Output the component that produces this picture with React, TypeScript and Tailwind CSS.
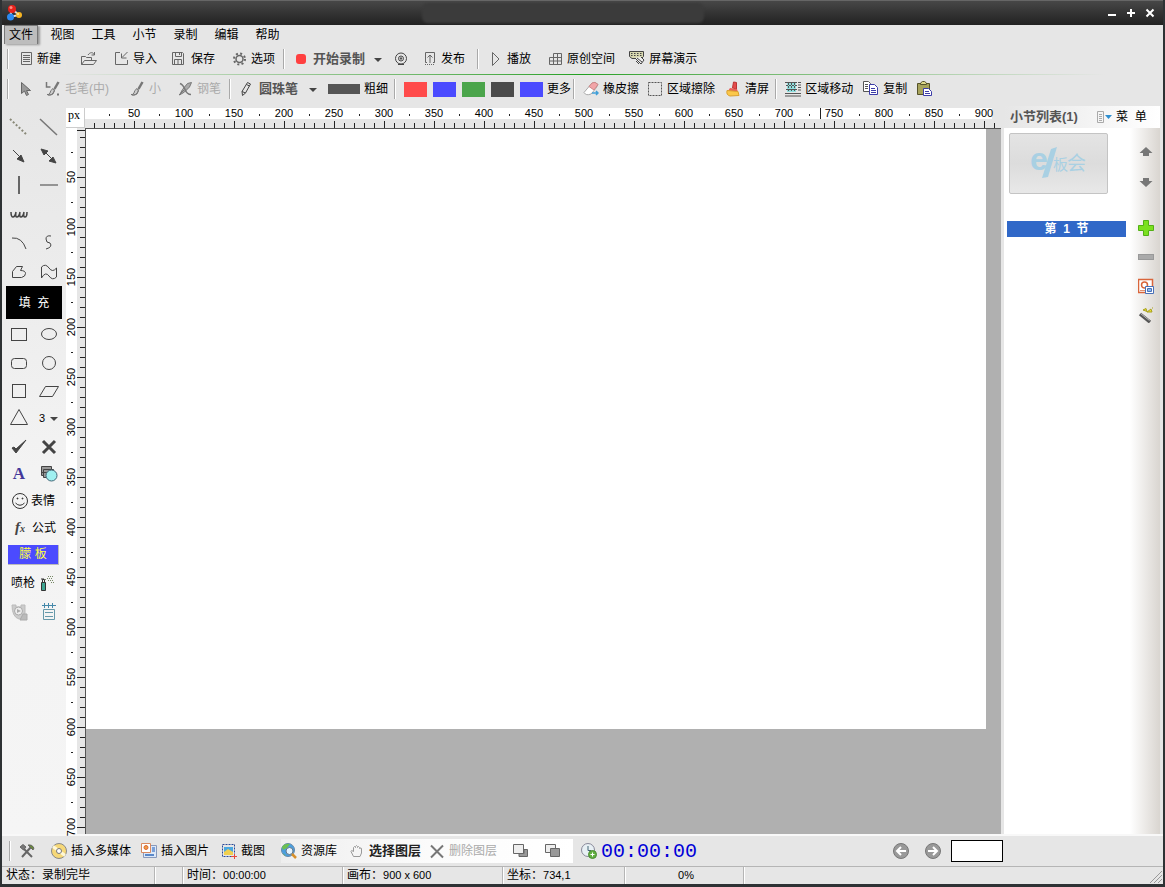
import React from "react";

interface IconProps {
  children: React.ReactNode;
  className?: string;
}

const Icon: React.FC<IconProps> = ({ children, className = "text-[#666]" }) => (
  <svg
    width="16"
    height="16"
    viewBox="0 0 16 16"
    fill="none"
    stroke="currentColor"
    strokeWidth="1"
    className={`shrink-0 ${className}`}
    aria-hidden="true"
  >
    {children}
  </svg>
);

interface ToolProps {
  icon?: React.ReactNode;
  text?: string;
  label?: string;
  className?: string;
}

const Tool: React.FC<ToolProps> = ({ icon, text, label, className = "mr-4" }) => (
  <button
    type="button"
    aria-label={label}
    className={`flex h-6 shrink-0 items-center gap-1 whitespace-nowrap ${className}`}
  >
    {icon}
    {text && <span>{text}</span>}
  </button>
);

const Divider = () => (
  <div className="mr-2 h-5 w-0.5 shrink-0 border-l border-[#a9a9a9] bg-white"></div>
);

const Caret = () => (
  <svg width="10" height="16" viewBox="0 0 10 16" className="shrink-0" aria-hidden="true">
    <path d="M1 7h8L5 11z" fill="#444" />
  </svg>
);

const menus = ["视图", "工具", "小节", "录制", "编辑", "帮助"];

const TitleBar = () => (
  <header className="flex h-[25px] items-center bg-linear-to-b from-[#474747] to-[#222] border-t border-[#666]">
    <svg width="18" height="18" viewBox="0 0 18 18" className="ml-1 shrink-0" aria-hidden="true">
      <path d="M6 5L4 13L13 11Z" fill="none" stroke="#ddd" strokeWidth="2" />
      <circle cx="6" cy="5" r="4" fill="#e8221b" />
      <circle cx="5" cy="3.500" r="1.500" fill="#ff8a80" />
      <circle cx="4.500" cy="13" r="3.500" fill="#2b8af0" />
      <circle cx="13" cy="11" r="3" fill="#f8b522" />
      <circle cx="12" cy="10" r="1" fill="#ffe9a0" />
    </svg>
    <div className="flex flex-1 justify-center">
      <div className="h-5 w-[282px] rounded-md bg-[#3b3b3b] blur-[1px]"></div>
    </div>
    <div className="mr-1 flex text-white">
      <button type="button" aria-label="最小化" className="flex w-[19px] justify-center">
        <Icon className="text-white"><path d="M4 10h8" strokeWidth="2" /></Icon>
      </button>
      <button type="button" aria-label="最大化" className="flex w-[19px] justify-center">
        <Icon className="text-white"><path d="M4 8h8M8 4v8" strokeWidth="2" /></Icon>
      </button>
      <button type="button" aria-label="关闭" className="flex w-[19px] justify-center">
        <Icon className="text-white"><path d="M4.500 4.500l7 7M11.500 4.500l-7 7" strokeWidth="2" /></Icon>
      </button>
    </div>
  </header>
);

const MenuBar = () => (
  <nav className="flex h-[18px] items-start pl-0.5">
    <button
      type="button"
      className="mr-1 h-[19px] w-[34px] shrink-0 border border-b-0 border-[#777] bg-[#bdbdbd] shadow-[2px_1px_2px_#999]"
    >
      文件
    </button>
    {menus.map((m) => (
      <button type="button" key={m} className="h-[19px] w-[41px] shrink-0 text-center">
        {m}
      </button>
    ))}
  </nav>
);

const FileBar = () => (
  <div className="flex h-[31px] items-center pl-[5px]">
    <Divider />
    <Tool
      className="mr-5"
      text="新建"
      icon={<Icon><path d="M4.500 1.500h10v12h-10zM6 4.500h7M6 6.500h7M6 8.500h7M6 10.500h7" /></Icon>}
    />
    <Tool
      label="打开"
      icon={<Icon><path d="M.5 13.500v-8h4l1 1h5v3M.5 13.500l3-4h12l-3 4zM7 4c2-3 5-3 6-.5M13.500 1v3h-3" /></Icon>}
    />
    <Tool
      className="mr-3.5"
      text="导入"
      icon={<Icon><path d="M7 1.500H2.500v12h12V9M14.500 1L9 6.500M8.500 2.500v4.500h5" /></Icon>}
    />
    <Tool
      text="保存"
      icon={<Icon><path d="M1.500 1.500h10l1 1v11h-11zM4.500 1.500v4h6v-4M8.500 2v2M3.500 13.500v-5h7v5M7 9v4" /></Icon>}
    />
    <Tool
      className="mr-2"
      text="选项"
      icon={
        <Icon>
          <circle cx="8.500" cy="8" r="3.500" strokeWidth="1.500" />
          <circle cx="8.500" cy="8" r="5.500" strokeWidth="2" strokeDasharray="2 2.320" />
        </Icon>
      }
    />
    <Divider />
    <Tool
      className="mr-2 text-[13px] font-bold text-[#555]"
      text="开始录制"
      icon={<Icon><rect x="3" y="3" width="10" height="10" rx="3" fill="#ff4040" stroke="none" /></Icon>}
    />
    <Tool className="mr-2.5" label="录制选项" icon={<Caret />} />
    <Tool
      className="mr-3"
      label="摄像头"
      icon={<Icon className="text-[#444]"><circle cx="8" cy="7.500" r="5.500" /><circle cx="8" cy="7.500" r="2.500" /><circle cx="8" cy="7.500" r=".8" fill="currentColor" /><path d="M5 13.500h6" /></Icon>}
    />
    <Tool
      className="mr-3"
      text="发布"
      icon={<Icon><path d="M6 11.500H4.500v-10h9v10H12M9 12V4M6.500 6.500L9 4l2.500 2.500" /><path d="M4 13.500h10" strokeDasharray="1 1" /></Icon>}
    />
    <Divider />
    <Tool text="播放" icon={<Icon><path d="M5.500 1.500v13L12 8z" /></Icon>} />
    <Tool
      className="mr-3.5"
      text="原创空间"
      icon={<Icon><path d="M2.500 6.500v7h12v-11h-8v11M2.500 6.500h12M2.500 10h12M10.500 2.500v11" /></Icon>}
    />
    <Tool
      className="mr-3"
      text="屏幕演示"
      icon={
        <Icon className="text-[#444]">
          <path d="M.5 .5h14v5l-2 2H3l-2.500-2z" fill="#d8d8b0" />
          <path d="M2 2.500h12M2 4.500h12" strokeDasharray="1.500 1.500" />
          <path d="M6 7l6 6 3-4-3-3M8 7l5 4M7 10l3 3" fill="#eee" />
        </Icon>
      }
    />
  </div>
);

const brush = (
  <>
    <path d="M13.500 1l-4 7" strokeWidth="2.500" />
    <path d="M8 7.500q-3 2-3 4.500-1 2-3 1.500 5 2 7.500-4z" fill="#ccc" />
    <path d="M9 8q1 2-1 5-2 1.500-5 1" />
  </>
);

const PenBar = () => (
  <div className="flex h-7 items-center pl-[5px]">
    <Divider />
    <Tool
      className="mr-3"
      label="选择"
      icon={<Icon><path d="M4.500 1.500v11l3-2.500 2 4.500 2-1-2-4h4z" fill="#999" /></Icon>}
    />
    <Tool
      className="mr-5 text-[#aaa]"
      text="毛笔(中)"
      icon={<Icon className="text-[#777]"><path d="M1.500 1v5h4" strokeWidth="1.500" />{brush}<path d="M12 13.500h2" strokeWidth="2" /></Icon>}
    />
    <Tool className="mr-4 text-[#aaa]" text="小" icon={<Icon className="text-[#777]">{brush}</Icon>} />
    <Tool
      className="mr-2 text-[#aaa]"
      text="钢笔"
      icon={<Icon className="text-[#777]"><path d="M14.500 1.500l-4 1-5 6-3 5.500 5-3 5-5zM2 14l5-5" fill="#aaa" /><path d="M3 2.500q3 1 5 6t6 5" strokeWidth="1.500" /></Icon>}
    />
    <Divider />
    <Tool
      className="mr-2.5 text-[13px] font-bold text-[#555]"
      text="圆珠笔"
      icon={<Icon className="text-[#444]"><path d="M8.500 1.500l3 1.500-5 9-3 2.500-.5-4zM7.500 3.500l3 1.500M3 10.500l3.500 1.500" /></Icon>}
    />
    <Tool className="mr-2.5" label="笔型" icon={<Caret />} />
    <button type="button" className="mr-1.5 flex h-6 shrink-0 items-center gap-1">
      <span className="h-2.5 w-8 bg-[#555]"></span>
      <span>粗细</span>
    </button>
    <Divider />
    <div className="mr-1 flex gap-1.5">
      <button type="button" aria-label="红色" className="h-[15px] w-[23px] bg-[#ff4b4b]"></button>
      <button type="button" aria-label="蓝色" className="h-[15px] w-[23px] bg-[#4b4bff]"></button>
      <button type="button" aria-label="绿色" className="h-[15px] w-[23px] bg-[#4ba54b]"></button>
      <button type="button" aria-label="黑色" className="h-[15px] w-[23px] bg-[#4b4b4b]"></button>
      <button type="button" aria-label="当前颜色" className="h-[15px] w-[23px] bg-[#4b4bff]"></button>
    </div>
    <Tool className="mr-0.5" text="更多" />
    <Divider />
    <Tool
      className="mr-2"
      text="橡皮擦"
      icon={
        <Icon>
          <path d="M1 11.500L9 2q3-2 6 1.500-1 3-7 9.500-5 2-7-1.500z" fill="#fff" stroke="#aaa" />
          <path d="M6 5.500L9 2q3-2 6 1.500L11 9z" fill="#f2a5a8" stroke="#c88" />
          <path d="M9 12h6M13 10l2 2-2 2" stroke="#3f9fd8" strokeWidth="1.500" />
        </Icon>
      }
    />
    <Tool
      className="mr-2.5"
      text="区域擦除"
      icon={<Icon><path d="M1.500 1.500h13v13h-13z" stroke="#555" strokeDasharray="2 1" /></Icon>}
    />
    <Tool
      className="mr-1.5"
      text="清屏"
      icon={
        <Icon>
          <path d="M8.500 1l3 .5V8l-4-1z" fill="#e44b4b" stroke="#b33" />
          <path d="M5 7l7 1 1 3-10-1z" fill="#e8605a" stroke="none" />
          <path d="M2 9.500l11 1 1 4-9 .5q-4-1-3-5.500z" fill="#fbc84a" stroke="#d9a030" />
        </Icon>
      }
    />
    <Divider />
    <Tool
      className="mr-2.5"
      text="区域移动"
      icon={
        <Icon>
          <rect x="2" y="2" width="9" height="9" fill="#8fe0e0" stroke="none" />
          <path d="M0 1.500h12M13 1.500h3M13 4h3M13 6.500h3M13 9h3M0 12.500h16M0 15h16" stroke="#555" />
          <path d="M3.500 2v9M6.500 2v9M9.500 2v9M1 4.500h11M1 8.500h11" stroke="#555" strokeDasharray="2 1" />
        </Icon>
      }
    />
    <Tool
      className="mr-2.5"
      text="复制"
      icon={
        <Icon>
          <path d="M.5 .5h5l2 2v8h-7z" fill="#fff" stroke="#555" />
          <path d="M2 3.500h3M2 5.500h3M2 7.500h3" stroke="#555" />
          <path d="M6.500 3.500h5l3 3v7h-8z" fill="#fff" stroke="#3c3ca8" />
          <path d="M8 7.500h4M8 9.500h5M8 11.500h5" stroke="#3c3ca8" />
        </Icon>
      }
    />
    <Tool
      className="mr-2"
      label="粘贴"
      icon={
        <Icon>
          <path d="M.5 2.500h12v11H.5z" fill="#a7a35c" stroke="#55522a" />
          <path d="M3.500 3.500V2l2-1.500h2l2 1.500v1.500z" fill="#ddd88a" stroke="#55522a" />
          <path d="M6.500 7.500h5l3 3v4h-8z" fill="#fff" stroke="#3c3ca8" />
          <path d="M8 10.500h4M8 12.500h5" stroke="#3c3ca8" />
        </Icon>
      }
    />
  </div>
);

interface ShapeProps {
  label: string;
  children: React.ReactNode;
}

const Shape: React.FC<ShapeProps> = ({ label, children }) => (
  <button type="button" aria-label={label} className="flex h-full items-center justify-center">
    <svg width="20" height="20" viewBox="0 0 20 20" fill="none" stroke="#444" aria-hidden="true">
      {children}
    </svg>
  </button>
);

const ShapePanel = () => (
  <aside className="w-16 shrink-0 bg-linear-to-b from-[#e6e6e6] via-[#f3f3f3] to-[#f5f5f5] px-0.5 pt-[9px]">
    <div className="grid auto-rows-[29px] grid-cols-2">
      <Shape label="虚线"><path d="M1 2l17 16" stroke="#887" strokeWidth="2" strokeDasharray="2 2" /></Shape>
      <Shape label="直线"><path d="M1 2l17 16" stroke="#777" strokeWidth="1.500" /></Shape>
      <Shape label="箭头"><path d="M4 4l8 8" /><path d="M15 16l-7-3 4-4z" fill="#444" /></Shape>
      <Shape label="双箭头"><path d="M5 5l10 10" /><path d="M2 3l7 2-4 4zM17 17l-7-2 4-4z" fill="#444" /></Shape>
      <Shape label="竖线"><path d="M10 1v18" stroke="#666" strokeWidth="2" /></Shape>
      <Shape label="横线"><path d="M1 10h18" stroke="#777" strokeWidth="1.500" /></Shape>
      <Shape label="波浪线"><path d="M2 8q0 5 2 5t3-5q-1 5 1 5t3-5q-1 5 1 5t3-5q-1 5 1 5t2-5" strokeWidth="1.500" /></Shape>
      <span></span>
      <Shape label="弧线"><path d="M3 5q10-1 14 11" /></Shape>
      <Shape label="曲线"><path d="M12 3q-5-1-5 3t4 4q3 4-4 6" /></Shape>
      <Shape label="多边形"><path d="M3.500 15.500v-6l4-5h6l-2 4q5 0 5 3t-4 4z" /></Shape>
      <Shape label="波浪形"><path d="M2.500 5q4-4 7.500 1t7.500 0v9q-4 4-7.500-1t-7.500 2z" /></Shape>
    </div>
    <button type="button" className="mb-px ml-0.5 h-[33px] w-14 bg-black text-[12px] text-white">
      <span className="whitespace-pre">填  充</span>
    </button>
    <div className="grid auto-rows-[28px] grid-cols-2">
      <Shape label="矩形"><rect x="2.500" y="4.500" width="15" height="12" /></Shape>
      <Shape label="椭圆"><ellipse cx="10" cy="10" rx="7.500" ry="5.500" /></Shape>
      <Shape label="圆角矩形"><rect x="2.500" y="6.500" width="15" height="10" rx="3" /></Shape>
      <Shape label="圆形"><circle cx="10" cy="11" r="6.500" /></Shape>
      <Shape label="正方形"><rect x="3.500" y="4.500" width="13" height="13" /></Shape>
      <Shape label="平行四边形"><path d="M6.500 6.500h13l-6 10H.5z" /></Shape>
      <Shape label="三角形"><path d="M10 1.500L18.500 16.500h-17z" /></Shape>
      <label className="flex items-center justify-center">
        <select aria-label="边数" className="w-2.5 appearance-none text-[11px]">
          <option>3</option>
        </select>
        <Caret />
      </label>
      <Shape label="对号"><path d="M3 12l4 5L17 4 7 13 5 11z" fill="#444" /></Shape>
      <Shape label="叉号"><path d="M4 5l12 12M16 5L4 17" strokeWidth="3" /></Shape>
    </div>
    <div className="grid auto-rows-[27px] grid-cols-2">
      <button type="button" className="font-['Liberation_Serif',serif] text-[17px] font-bold text-[#44389a]">A</button>
      <Shape label="图形库">
        <path d="M2.500 2.500h10v9h-10z" fill="#999" />
        <path d="M4.500 5.500h10v8h-10zM2 8.500h8" fill="#999" />
        <circle cx="12.500" cy="11.500" r="5.500" fill="#9ff0f0" stroke="#467" />
      </Shape>
      <button type="button" className="col-span-2 flex items-center gap-px pl-1.5">
        <svg width="20" height="20" viewBox="0 0 20 20" fill="none" stroke="#333" aria-hidden="true">
          <circle cx="10" cy="10" r="7.500" />
          <path d="M5.500 12q4.500 4.500 9 0" />
          <circle cx="7.500" cy="7.500" r=".5" fill="#333" />
          <circle cx="12.500" cy="7.500" r=".5" fill="#333" />
        </svg>
        <span>表情</span>
      </button>
      <button type="button" className="col-span-2 flex items-center gap-1 pl-2">
        <span className="w-4 font-['Liberation_Serif',serif] text-[15px] font-bold italic leading-4 text-[#444]">
          f<span className="text-[10px]">x</span>
        </span>
        <span>公式</span>
      </button>
      <div className="col-span-2 flex items-center pl-1">
        <button type="button" className="h-5 w-[51px] border-b border-r border-[#bbb] bg-[#4b4bff] text-[12px] leading-none text-[#ffff40]">
          朦 板
        </button>
      </div>
    </div>
    <div className="grid auto-rows-[29px] grid-cols-2">
      <button type="button" className="col-span-2 flex items-center gap-1 pl-[7px]">
        <span>喷枪</span>
        <svg width="16" height="16" viewBox="0 0 16 16" fill="none" stroke="#333" aria-hidden="true">
          <path d="M2.500 7.500h4v8h-4z" fill="#3fa592" />
          <path d="M3.500 7V4.500h2V7M2 4h3" />
          <path d="M6 4.500h2M8 3.500h6M9 1.500h6M9 5.500h5M12 7.500h3" stroke="#786" strokeDasharray="1 1" />
        </svg>
      </button>
      <Shape label="视频">
        <path d="M3 3h4v2h5V3h4v8q0 5-6 6-7-2-7-14z" fill="#ccc" stroke="#bbb" />
        <circle cx="9.500" cy="9" r="4" fill="#eee" stroke="#aaa" />
        <path d="M14 12h4v6h-7z" fill="#bbb" stroke="#aaa" />
        <path d="M8 7v4l4-2z" fill="#aaa" stroke="none" />
      </Shape>
      <Shape label="坐标">
        <path d="M3 3.500h14M5.500 1v5M9.500 1v5M13.500 1v5" stroke="#48a" />
        <path d="M4.500 7.500h11v10h-11zM6 10.500h8M6 14.500h8" stroke="#69a" />
      </Shape>
    </div>
  </aside>
);

// ruler marks, one per ten units of canvas
const hMarks = Array.from({ length: 91 }, (_, i) => (i + 1) * 10);
const vMarks = Array.from({ length: 70 }, (_, i) => (i + 1) * 10);

const HorizontalRuler = () => (
  <svg height="20" className="w-0 min-w-0 flex-1 overflow-hidden" fontSize="11" textAnchor="middle">
    <rect width="907" height="11" fill="#fff" />
    {hMarks.map((n) => (
      <g key={n}>
        <path d={`M${n - 0.5} ${n % 50 ? 15 : 13}V20`} stroke="#222" />
        {n % 50 === 0 && <text x={n - 1} y="9">{n}</text>}
        {n % 50 === 0 && <path d={`M${n - 25.5} 6v2`} stroke="#222" />}
      </g>
    ))}
    <path d="M735.500 0v11" stroke="#222" />
  </svg>
);

const VerticalRuler = () => (
  <div className="relative z-10 w-[19px] shrink-0 bg-linear-to-r from-white from-[11px] to-transparent to-[11px]">
    <svg width="19" height="706" fontSize="11" textAnchor="middle" className="overflow-visible">
      <path d="M11 2.500h8" stroke="#222" />
      {vMarks.map((n) => (
        <g key={n}>
          <path d={`M${n % 50 ? 14 : 11} ${n - 0.5}H19`} stroke="#222" />
          {n % 50 === 0 && <text transform={`translate(9 ${n - 1}) rotate(-90)`}>{n}</text>}
          {n % 50 === 0 && <path d={`M5 ${n - 25.5}h2`} stroke="#222" />}
        </g>
      ))}
    </svg>
  </div>
);

const Workspace = () => (
  <main className="flex min-w-0 flex-1 flex-col pt-[5px]">
    <div className="flex">
      <div className="h-5 w-[19px] shrink-0 border-b border-r border-[#ccc] bg-white pl-0.5 font-['Liberation_Serif',serif] text-[12px] leading-[14px]">
        px
      </div>
      <HorizontalRuler />
    </div>
    <div className="flex flex-1">
      <VerticalRuler />
      <div className="min-w-0 flex-1 overflow-hidden border-l border-t border-[#555] bg-[#b0b0b0]">
        <div className="h-[600px] w-[900px] bg-white"></div>
      </div>
    </div>
  </main>
);

const SectionPanel = () => (
  <aside className="ml-[3px] mr-[3px] mt-[3px] flex w-[156px] shrink-0 flex-col bg-white">
    <div className="flex h-[22px] items-center bg-linear-to-r from-[#e6e6e6] to-white pl-1.5">
      <h2 className="w-[86px] text-[13px] font-bold text-[#555]">小节列表(1)</h2>
      <button type="button" className="flex items-center gap-1">
        <svg width="16" height="14" viewBox="0 0 16 14" fill="none" stroke="#aaa" aria-hidden="true">
          <path d="M1.500 1.500h6v11h-6zM3 4.500h3M3 6.500h3M3 8.500h3M3 10.500h3" />
          <path d="M9 5h7l-3.500 4z" fill="#2f8fd0" stroke="none" />
        </svg>
        <span className="whitespace-pre">菜  单</span>
      </button>
    </div>
    <div className="flex flex-1">
      <div className="flex-1 pl-[3px]">
        <div className="ml-0.5 mt-[5px] flex h-[61px] w-[99px] items-center justify-center rounded-xs border border-[#c4c4c4] bg-linear-to-b from-[#e4e4e4] via-[#dcdcdc] to-[#e8e8e8]">
          <svg width="60" height="36" viewBox="0 0 60 36" fill="#a9d0e3" aria-hidden="true">
            <text x="1" y="24" fontSize="32" fontWeight="bold">e</text>
            <path d="M22 3l6-2-9 30-6 1z" />
            <text x="24" y="24" fontSize="15">板</text>
            <text x="38" y="24" fontSize="19">会</text>
          </svg>
        </div>
        <button type="button" className="mt-[27px] h-4 w-full whitespace-pre bg-[#3068c8] text-[12px] font-bold leading-4 text-white">
          第  1  节
        </button>
      </div>
      <div className="ml-1 flex w-[30px] shrink-0 flex-col items-center bg-linear-to-r from-white to-[#d9d5d0] pl-0.5 pt-[9px]">
        <Tool className="h-[30px]" label="上移" icon={<Icon><path d="M8 3l6.500 6H11v3H5V9H1.500z" fill="#777" stroke="none" /></Icon>} />
        <Tool className="mb-4 h-[30px]" label="下移" icon={<Icon><path d="M8 13l6.500-6H11V4H5v3H1.500z" fill="#777" stroke="none" /></Icon>} />
        <Tool className="h-[29px]" label="添加" icon={<Icon><path d="M5.500 .5h5v5h5v5h-5v5h-5v-5h-5v-5h5z" fill="#7be020" stroke="#52b015" /></Icon>} />
        <Tool className="h-[29px]" label="删除" icon={<Icon><rect x=".5" y="5.500" width="15" height="5" fill="#aaa" stroke="#999" /></Icon>} />
        <Tool
          className="h-[29px]"
          label="导入演示文稿"
          icon={
            <Icon>
              <path d="M.5 1.500h14v13H.5z" fill="#fff" stroke="#d9653b" strokeWidth="1.500" />
              <circle cx="6.500" cy="7" r="3" stroke="#d9653b" strokeWidth="1.500" />
              <path d="M2 12.500h5" stroke="#e09070" />
              <path d="M7.500 8.500h8v7h-8z" fill="#fff" stroke="#4870b8" />
              <path d="M9.500 10.500h4v3h-4z" fill="#8ab8f0" stroke="#4870b8" />
            </Icon>
          }
        />
        <Tool
          className="h-[29px]"
          label="特效"
          icon={
            <Icon>
              <path d="M2 7l10 8" stroke="#555" strokeWidth="3.500" />
              <path d="M2.500 6.500l9 7" stroke="#bbb" />
              <path d="M5 3l3-1.500 1 3zM9 5l4-3 1 3zM14 1h1" fill="#e8e030" stroke="#a8a020" />
            </Icon>
          }
        />
      </div>
    </div>
  </aside>
);

const InsertBar = () => (
  <div className="flex h-8 items-center border-t-2 border-[#f8f8f8] pl-[7px]">
    <Divider />
    <Tool
      className="mr-4"
      label="工具箱"
      icon={<Icon><path d="M3 14L12 4M4 5l9 9" strokeWidth="2" /><path d="M1 4l3-2.500L7 4 4.500 7z" fill="#777" /><path d="M9 2q4-1 6 3l-1 2-3-3z" fill="#6a8a3a" /></Icon>}
    />
    <Tool
      className="mr-2.5"
      text="插入多媒体"
      icon={
        <Icon>
          <circle cx="8" cy="8" r="7.500" fill="#f6d878" stroke="#888" />
          <path d="M8 8L2 3.500M8 8l6 4.500" stroke="#fff8d8" strokeWidth="3" />
          <circle cx="8" cy="8" r="2.500" fill="#fff" stroke="#777" />
        </Icon>
      }
    />
    <Tool
      className="mr-3"
      text="插入图片"
      icon={
        <Icon>
          <path d="M2.500 2.500h13v12h-13z" fill="#dce8f8" stroke="#89b" />
          <path d="M.5 .5h9v9H.5z" fill="#fff" stroke="#d98a60" />
          <circle cx="5" cy="4.500" r="2" fill="#f0a040" stroke="#d9653b" />
          <path d="M4 13v-2h9v2z" fill="#5a88c8" stroke="none" />
          <path d="M11 4h3v5h-3z" fill="#7aa0d8" stroke="none" />
        </Icon>
      }
    />
    <Tool
      className="mr-4"
      text="截图"
      icon={
        <Icon>
          <path d="M1.500 1.500h12v12h-12z" stroke="#2a4a98" strokeDasharray="2 1" />
          <path d="M3 4h9v8H3z" fill="#4aa8e0" stroke="none" />
          <path d="M3 9l4-3 5 3v3H3z" fill="#f0d050" stroke="none" />
          <path d="M10 13.500h6M13.500 11v5" stroke="#e84a3a" />
        </Icon>
      }
    />
    <div className="flex items-center bg-linear-to-r from-[#eee] via-[#fbfbfb] to-white">
      <Tool
        className="mr-3"
        text="资源库"
        icon={
          <Icon>
            <circle cx="7" cy="7" r="6.500" fill="#4a9fe0" stroke="#68a" />
            <path d="M1 4q3-4 8-3l-3 4-4 2zM2 10l3 3-2-1z" fill="#6cc050" stroke="none" />
            <circle cx="8.500" cy="8" r="3.500" fill="#e4f4ff" stroke="#678" />
            <path d="M11 11l4 4" stroke="#d8902a" strokeWidth="2.500" />
          </Icon>
        }
      />
      <Tool
        className="mr-2 text-[13px] font-bold text-[#222]"
        text="选择图层"
        icon={<Icon className="text-[#999]"><path d="M4.500 13.500L2 8.500q0-2 2.500 0v-4q1-2 2 0v-1q1-2 2 0v1q1-2 2 0v1q2-1.500 2 .5v4l-1.500 3.500z" /></Icon>}
      />
      <Tool
        className="mr-4 text-[#aaa]"
        text="删除图层"
        icon={<Icon className="text-[#777]"><path d="M2 2.500l12 12M14 2.500l-12 12" strokeWidth="2" /></Icon>}
      />
      <Tool
        className="mr-4"
        label="置于顶层"
        icon={<Icon><path d="M6 10.500v3h8.500v-7H11v4z" fill="#999" /><path d="M.5 1.500h10v9H.5z" fill="#eee" /></Icon>}
      />
      <Tool
        className="mr-3"
        label="置于底层"
        icon={<Icon><path d="M.5 1.500h10v8H.5z" fill="#eee" /><path d="M5.500 5.500h9v8h-9z" fill="#999" /></Icon>}
      />
    </div>
    <div className="ml-2 flex shrink-0 items-center gap-1">
      <Icon>
        <circle cx="7" cy="7" r="6.500" fill="#e8f0f4" stroke="#889" />
        <path d="M7 3v4.500h3" stroke="#467" />
        <circle cx="11.500" cy="11.500" r="4" fill="#62b040" stroke="#4a8a30" />
        <path d="M9.500 11.500h4M11.500 9.500v4" stroke="#fff" />
      </Icon>
      <span className="pt-0.5 font-['Liberation_Mono',monospace] text-[20px] leading-6 text-[#0000d8]">00:00:00</span>
    </div>
    <div className="flex-1"></div>
    <div className="mr-40 flex shrink-0 items-center">
      <Tool
        className="mr-4"
        label="上一页"
        icon={<Icon><circle cx="8" cy="8" r="7.500" fill="#999" stroke="#777" /><path d="M13 8H4M8 4L4 8l4 4" stroke="#fff" strokeWidth="2" /></Icon>}
      />
      <Tool
        className="mr-2.5"
        label="下一页"
        icon={<Icon><circle cx="8" cy="8" r="7.500" fill="#999" stroke="#777" /><path d="M3 8h9M8 4l4 4-4 4" stroke="#fff" strokeWidth="2" /></Icon>}
      />
      <input type="text" aria-label="页码" className="h-[22px] w-[52px] border border-black bg-white px-1" />
    </div>
  </div>
);

const cell = "shrink-0 border-r border-[#b5b5b5] pl-1 shadow-[1px_0_0_#fff]";

const StatusBar = () => (
  <footer className="flex h-[18px] whitespace-nowrap border-t border-[#b5b5b5] leading-4">
    <div className={`${cell} w-[153px]`}>状态：录制完毕</div>
    <div className={`${cell} w-7`}></div>
    <div className={`${cell} w-40`}>时间：<span className="text-[11px]">00:00:00</span></div>
    <div className={`${cell} w-40`}>画布：<span className="text-[11px]">900 x 600</span></div>
    <div className={`${cell} w-[122px]`}>坐标：<span className="text-[11px]">734,1</span></div>
    <div className={`${cell} w-[119px] text-center text-[11px]`}>0%</div>
    <div className="flex flex-1 items-end justify-end">
      <svg width="14" height="14" viewBox="0 0 14 14" stroke="#999" aria-hidden="true">
        <path d="M1 13L13 1M5 13l8-8M9 13l4-4" />
      </svg>
    </div>
  </footer>
);

const App: React.FC = () => {
  return (
    <div className="flex min-h-screen w-full flex-col overflow-hidden border-x-2 border-b-[3px] border-[#2e3234] bg-[#e6e6e6] font-['Liberation_Sans','Noto_Sans_CJK_SC',sans-serif] text-[12px] leading-4 text-black">
      <TitleBar />
      <MenuBar />
      <FileBar />
      <div className="h-px bg-linear-to-r from-[#e6e6e6] from-5% via-[#20a020] to-[#e6e6e6] to-95%"></div>
      <PenBar />
      <div className="flex flex-1">
        <ShapePanel />
        <Workspace />
        <SectionPanel />
      </div>
      <InsertBar />
      <StatusBar />
    </div>
  );
};

export default App;
